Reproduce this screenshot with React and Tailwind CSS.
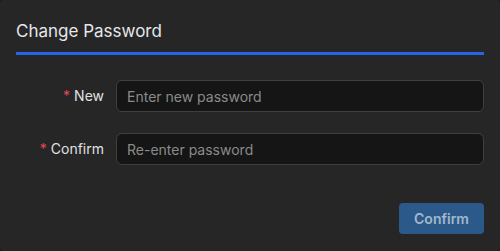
import React from "react";

const Field = ({ label, placeholder }) => (
  <div className="flex items-center gap-3">
    <label className="w-[88px] shrink-0 text-right text-sm text-[#e0e0e3]">
      <span className="mr-1 text-[#e5484d]">*</span>
      {label}
    </label>
    <input
      type="password"
      placeholder={placeholder}
      className="h-8 flex-1 rounded-md border border-[#3f3f3f] bg-[#151515] px-[10px] text-sm text-[#e5e5e5] placeholder:text-[#8a8a8a] outline-none"
    />
  </div>
);

export default function App() {
  return (
    <div className="h-[251px] w-[500px] bg-[#1a1a1a] font-['Inter',sans-serif]">
      <div className="flex h-full flex-col rounded-[3px] bg-[#262626] px-4">
        {/* Header */}
        <div className="pt-[19px]">
          <h2 className="text-[17px] leading-6 text-[#e5e7eb]">Change Password</h2>
          <div className="mt-[9px] h-[3px] bg-[#2563eb]" />
        </div>

        {/* Form */}
        <div className="mt-[25px] flex flex-col gap-[21px]">
          <Field label="New" placeholder="Enter new password" />
          <Field label="Confirm" placeholder="Re-enter password" />
        </div>

        {/* Footer */}
        <div className="mt-[38px] flex justify-end">
          <button className="h-[31px] w-[85px] rounded bg-[#2b5a8a] text-sm font-semibold text-[#a3b7cc]">
            Confirm
          </button>
        </div>
      </div>
    </div>
  );
}
